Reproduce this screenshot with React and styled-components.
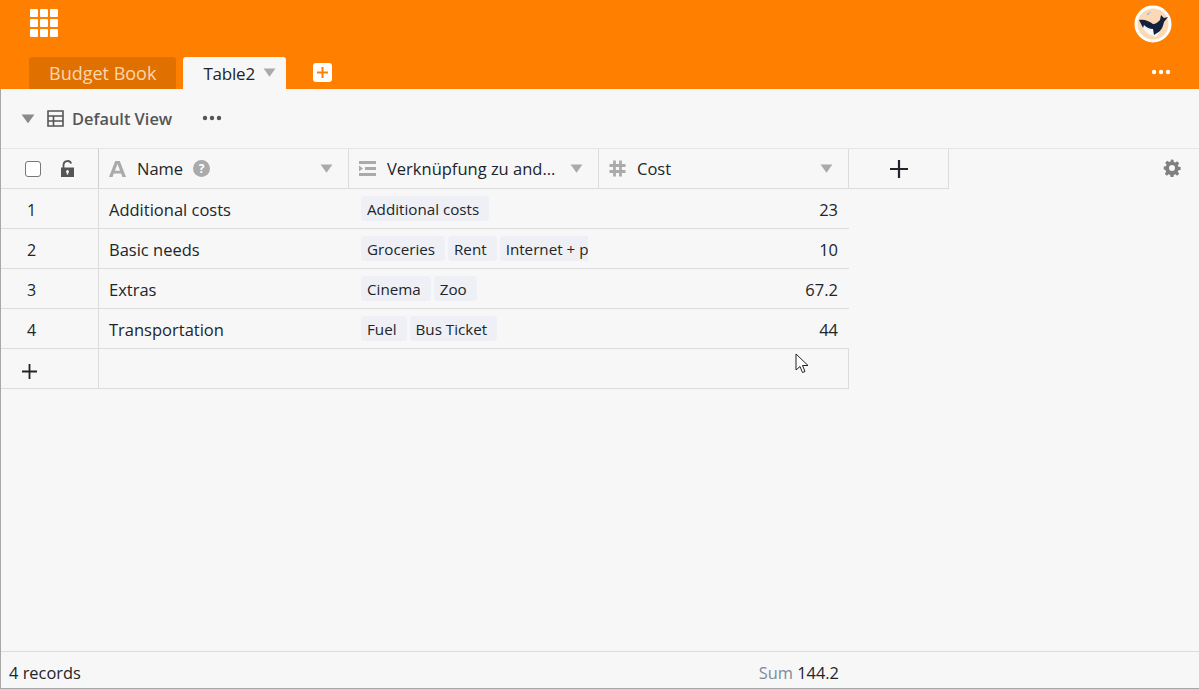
import React from 'react'
import styled, { createGlobalStyle } from 'styled-components'

const GlobalStyle = createGlobalStyle`
  html, body { margin: 0; padding: 0; height: 100%; }
  #root { height: 100%; }
  body { font-family: "Open Sans", "Noto Sans", sans-serif; color: #212529; background: #f7f7f7; overflow: hidden; }
  * { box-sizing: border-box; }
`

const rows = [
  { id: 1, name: 'Additional costs', links: ['Additional costs'], cost: '23' },
  { id: 2, name: 'Basic needs', links: ['Groceries', 'Rent', 'Internet + phone'], cost: '10' },
  { id: 3, name: 'Extras', links: ['Cinema', 'Zoo'], cost: '67.2' },
  { id: 4, name: 'Transportation', links: ['Fuel', 'Bus Ticket'], cost: '44' },
]

const Caret = ({ size = 13, color = '#aaa' }) => (
  <svg width={size} height={size * 0.7} viewBox="0 0 12 8.4">
    <path d="M0.5 0.5h11L6 8z" fill={color} />
  </svg>
)

const Dots = ({ color }) => (
  <svg width="20" height="6" viewBox="0 0 20 6">
    <circle cx="3" cy="3" r="2.2" fill={color} />
    <circle cx="10" cy="3" r="2.2" fill={color} />
    <circle cx="17" cy="3" r="2.2" fill={color} />
  </svg>
)

const Whale = () => (
  <svg width="38" height="38" viewBox="0 0 38 38">
    <circle cx="19" cy="19" r="17" fill="#fbd9b4" stroke="#fff" strokeWidth="3" />
    <path d="M6 17c2 8 8 13 16 15l4-5-7-6z" fill="#f4f7fc" />
    <path d="M5 15c5-1 10 1 14 4 3 0 5-2 7-4l1-5 3 3 4-1-4 5c-1 5-3 9-7 11l-3 2-1-6c-4 0-7-2-9-4l-1 3-2-4z" fill="#14213d" />
    <circle cx="14" cy="9" r="1" fill="#8fb3dc" />
    <circle cx="16" cy="7.500" r="0.7" fill="#8fb3dc" />
  </svg>
)

const PlusIcon = ({ size }) => (
  <svg width={size} height={size} viewBox="0 0 18 18">
    <path d="M9 0v18M0 9h18" stroke="#212529" strokeWidth="2.200" />
  </svg>
)

function App() {
  return (
    <Page>
      <GlobalStyle />
      <Header>
        <TopRow>
          <AppGrid>
            {Array.from({ length: 9 }).map((_, i) => <i key={i} />)}
          </AppGrid>
          <Whale />
        </TopRow>
        <TabRow>
          <Tab>Budget Book</Tab>
          <Tab active>
            Table2
            <Caret />
          </Tab>
          <AddTab>
            <svg width="19" height="19" viewBox="0 0 19 19">
              <rect width="19" height="19" rx="3" fill="#fff" />
              <path d="M9.500 4v11M4 9.500h11" stroke="#ff8000" strokeWidth="2" />
            </svg>
          </AddTab>
          <TabMore><Dots color="#fff" /></TabMore>
        </TabRow>
      </Header>

      <ViewBar>
        <Caret size={14} color="#8a8a8a" />
        <ViewIcon width="17" height="17" viewBox="0 0 17 17">
          <path d="M1 1h15v15H1zM1 6h15M1 11h15M6.500 6v10" fill="none" stroke="#555" strokeWidth="1.600" />
        </ViewIcon>
        <ViewName>Default View</ViewName>
        <ViewMore><Dots color="#555" /></ViewMore>
      </ViewBar>

      <Content>
        <Table>
          <HeaderRow>
            <IndexHead>
              <Checkbox />
              <svg width="15" height="17" viewBox="0 0 15 17">
                <path d="M3.500 8V5a4 4 0 0 1 7.700-1.500" fill="none" stroke="#555" strokeWidth="1.800" />
                <path d="M1 7.500h13V17H1z" fill="#555" />
                <circle cx="7.500" cy="11.500" r="1.500" fill="#f7f7f7" />
                <path d="M6.800 12h1.400v2.500H6.800z" fill="#f7f7f7" />
              </svg>
            </IndexHead>
            <ColumnHead>
              <svg width="17" height="16" viewBox="0 0 17 16">
                <path d="M0 16L6.200 0h4.600L17 16h-3.600l-1.200-3.400H4.800L3.600 16zM5.900 9.800h5.200L8.500 3z" fill="#aaa" />
              </svg>
              <HeadLabel>Name</HeadLabel>
              <HelpBadge>?</HelpBadge>
              <HeadCaret><Caret /></HeadCaret>
            </ColumnHead>
            <ColumnHead>
              <svg width="17" height="15" viewBox="0 0 17 15">
                <path d="M0 0h17v3H0zM0 12h17v3H0zM6 6h11v3H6zM0 4.500l4 3-4 3z" fill="#aaa" />
              </svg>
              <HeadLabel>Verknüpfung zu and...</HeadLabel>
              <HeadCaret><Caret /></HeadCaret>
            </ColumnHead>
            <ColumnHead>
              <svg width="17" height="17" viewBox="0 0 17 17">
                <path d="M5.500 0.500v16M11.500 0.500v16M0.500 5.500h16M0.500 11.500h16" stroke="#aaa" strokeWidth="2.800" />
              </svg>
              <HeadLabel>Cost</HeadLabel>
              <HeadCaret><Caret /></HeadCaret>
            </ColumnHead>
            <AddColumn>
              <PlusIcon size={18} />
            </AddColumn>
          </HeaderRow>
          {rows.map((row) => (
            <Row key={row.id}>
              <IndexCell>{row.id}</IndexCell>
              <Cell>{row.name}</Cell>
              <LinkCell>
                <LinkList>
                  {row.links.map((link) => <LinkTag key={link}>{link}</LinkTag>)}
                </LinkList>
              </LinkCell>
              <Cell align="right">{row.cost}</Cell>
            </Row>
          ))}
          <AddRow>
            <AddRowIndex><PlusIcon size={15} /></AddRowIndex>
            <AddRowFill />
          </AddRow>
        </Table>
        <Settings>
          <svg width="18" height="18" viewBox="0 0 24 24">
            <path fill="#808080" fillRule="evenodd" d="M13.900 1l.5 3 2 .8 2.500-1.800 2.700 2.700-1.800 2.500.8 2 2.900.5v3.800l-2.900.5-.8 2 1.800 2.500-2.700 2.700-2.500-1.800-2 .8-.5 2.800h-3.800l-.5-2.800-2-.8-2.500 1.800-2.700-2.700 1.800-2.500-.8-2L1 13.800V10l2.900-.5.8-2-1.800-2.500 2.700-2.700 2.500 1.800 2-.8.5-2.800zM12 8a4 4 0 1 0 0 8 4 4 0 0 0 0-8z" />
          </svg>
        </Settings>
        <Cursor width="15" height="22" viewBox="0 0 15 22">
          <path d="M1 1v16l4-3.500 2.500 6 2.500-1-2.500-6H13z" fill="#fff" stroke="#222" strokeWidth="1" />
        </Cursor>
      </Content>

      <Footer>
        <span>4 records</span>
        <Sum><SumLabel>Sum</SumLabel> 144.2</Sum>
      </Footer>
    </Page>
  )
}

export default App

const Page = styled.div`
  height: 689px;
  display: flex;
  flex-direction: column;
  border-left: 1px solid #a8a8a8;
  border-bottom: 1px solid #a8a8a8;
  background: #f7f7f7;
`

const Header = styled.header`
  height: 89px;
  margin-left: -1px;
  background: #ff8000;
  display: flex;
  flex-direction: column;
`

const TopRow = styled.div`
  height: 57px;
  padding: 5px 27px 0 30px;
  display: flex;
  justify-content: space-between;
  align-items: flex-start;
`

const AppGrid = styled.div`
  margin-top: 4px;
  width: 28px;
  height: 28px;
  display: grid;
  grid-template-columns: repeat(3, 8px);
  grid-auto-rows: 8px;
  gap: 2px;

  i {
    background: #fff;
    border-radius: 1px;
  }
`

const TabRow = styled.div`
  height: 32px;
  padding-left: 29px;
  display: flex;
  align-items: flex-end;
`

const Tab = styled.div`
  height: 32px;
  margin-right: 7px;
  padding: 0 ${(p) => (p.active ? '10px' : '20px')} 0 20px;
  display: flex;
  align-items: center;
  gap: 8px;
  font-size: ${(p) => (p.active ? '17px' : '18px')};
  letter-spacing: ${(p) => (p.active ? '-0.2px' : '0')};
  border-radius: 3px 3px 0 0;
  background: ${(p) => (p.active ? '#f7f7f7' : '#e07000')};
  color: ${(p) => (p.active ? '#212529' : '#fbd7ae')};
`

const AddTab = styled.div`
  height: 32px;
  margin-left: 20px;
  display: flex;
  align-items: center;

  svg { display: block; margin-top: -2px; }
`

const TabMore = styled.div`
  margin-left: auto;
  margin-right: 28px;
  height: 32px;
  display: flex;
  align-items: center;
  padding-bottom: 2px;
`

const ViewBar = styled.div`
  height: 60px;
  padding: 0 0 0 20px;
  display: flex;
  align-items: center;
  border-bottom: 1px solid #e6e6e6;
`

const ViewIcon = styled.svg`
  margin-left: 12px;
`

const ViewName = styled.span`
  margin-left: 8px;
  font-size: 16.4px;
  font-weight: 600;
  color: #555;
`

const ViewMore = styled.div`
  margin-left: 30px;
  display: flex;
  margin-top: -2px;
`

const Content = styled.main`
  flex: 1;
  position: relative;
  min-height: 0;
`

const Table = styled.div`
  width: 948px;
`

const HeaderRow = styled.div`
  height: 40px;
  display: flex;
  border-bottom: 1px solid #dcdcdc;
`

const IndexHead = styled.div`
  width: 98px;
  flex: none;
  padding-left: 24px;
  display: flex;
  align-items: center;
  gap: 19px;
  border-right: 1px solid #cfcfcf;
`

const Checkbox = styled.span`
  width: 16px;
  height: 16px;
  border: 1.5px solid #777;
  border-radius: 3px;
  background: #fff;
`

const ColumnHead = styled.div`
  width: 250px;
  flex: none;
  padding: 0 15px 0 10px;
  display: flex;
  align-items: center;
  border-right: 1px solid #dcdcdc;
`

const HeadLabel = styled.span`
  margin-left: 11px;
  font-size: 16.5px;
  white-space: nowrap;
`

const HelpBadge = styled.span`
  margin-left: 10px;
  width: 17px;
  height: 17px;
  border-radius: 50%;
  background: #aaa;
  color: #fff;
  font-size: 12px;
  font-weight: 700;
  display: flex;
  align-items: center;
  justify-content: center;
`

const HeadCaret = styled.span`
  margin-left: auto;
  display: flex;
`

const AddColumn = styled.div`
  width: 100px;
  flex: none;
  display: flex;
  align-items: center;
  justify-content: center;
  border-right: 1px solid #dcdcdc;
`

const Row = styled.div`
  width: 848px;
  height: 40px;
  display: flex;
  border-bottom: 1px solid #dcdcdc;
`

const IndexCell = styled.div`
  width: 98px;
  flex: none;
  padding: 2px 0 0 26px;
  display: flex;
  align-items: center;
  font-size: 16px;
  border-right: 1px solid #dcdcdc;
`

const AddRowIndex = styled(IndexCell)`
  padding: 5px 0 0 21px;
`

const Cell = styled.div`
  width: 250px;
  flex: none;
  padding: 1px 11px 0 10px;
  display: flex;
  align-items: center;
  justify-content: ${(p) => (p.align === 'right' ? 'flex-end' : 'flex-start')};
  font-size: 16.5px;
`

const LinkCell = styled.div`
  width: 250px;
  flex: none;
  padding: 0 11px 0 12px;
  display: flex;
  align-items: center;
`

const LinkList = styled.div`
  flex: 1;
  min-width: 0;
  display: flex;
  gap: 3px;
  overflow: hidden;
`

const LinkTag = styled.span`
  flex: none;
  height: 25px;
  padding: 0 10px 0 6px;
  display: flex;
  align-items: center;
  border-radius: 4px;
  background: #eef0f6;
  font-size: 15.2px;
  white-space: nowrap;
`

const AddRow = styled.div`
  width: 848px;
  height: 40px;
  display: flex;
  border-bottom: 1px solid #dcdcdc;
  border-right: 1px solid #dcdcdc;
`

const AddRowFill = styled.div`
  flex: 1;
`

const Settings = styled.div`
  position: absolute;
  top: 10px;
  right: 18px;
  display: flex;
`

const Cursor = styled.svg`
  position: absolute;
  left: 794px;
  top: 204px;
`

const Footer = styled.footer`
  height: 37px;
  padding: 4px 360px 0 8px;
  display: flex;
  align-items: center;
  justify-content: space-between;
  border-top: 1px solid #dcdcdc;
  font-size: 16.4px;
`

const Sum = styled.span`
  white-space: pre;
`

const SumLabel = styled.span`
  color: #7f8a99;
`
